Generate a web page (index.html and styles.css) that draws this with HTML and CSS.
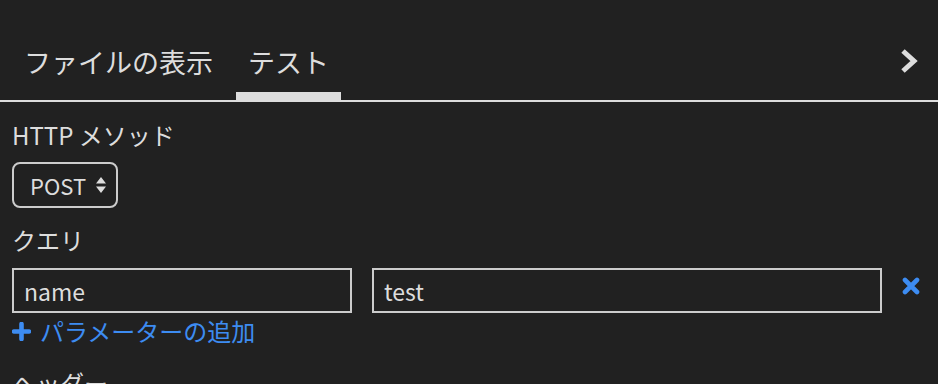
FILE: index.html
```html
<!DOCTYPE html>
<html lang="ja">
<head>
<meta charset="utf-8">
<link rel="stylesheet" href="styles.css">
</head>
<body>
<div class="tabbar">
  <div class="tabs">
    <div class="tab">ファイルの表示</div>
    <div class="tab active">テスト</div>
  </div>
  <svg class="chevron" width="18" height="26" viewBox="0 0 18 26"><path d="M3 3 L14 13 L3 23" fill="none" stroke="#dddddd" stroke-width="5" stroke-linejoin="miter"/></svg>
</div>
<div class="content">
  <div class="label">HTTP メソッド</div>
  <div class="select">
    <span class="select-text">POST</span>
    <svg class="updown" width="10" height="18" viewBox="0 0 10 18"><path d="M5 1 L10 7.5 L0 7.5 Z M5 17 L10 10.5 L0 10.5 Z" fill="#dddddd"/></svg>
  </div>
  <div class="label label-query">クエリ</div>
  <div class="param-row">
    <input class="field field-key" type="text" value="name">
    <input class="field field-value" type="text" value="test">
    <svg class="remove" width="18" height="18" viewBox="0 0 18 18"><path d="M3 3 L15 15 M15 3 L3 15" stroke="#3d8cf2" stroke-width="4.6" stroke-linecap="round"/></svg>
  </div>
  <div class="add-param">
    <svg class="plus" width="19" height="19" viewBox="0 0 19 19"><path d="M9.5 2 V17 M2 9.5 H17" stroke="#3d8cf2" stroke-width="4.6" stroke-linecap="round"/></svg>
    <span>パラメーターの追加</span>
  </div>
  <div class="label label-header">ヘッダー</div>
</div>
</body>
</html>
```
FILE: styles.css
```css
html, body {
  margin: 0;
  padding: 0;
  background: #212121;
  color: #dddddd;
  font-family: "Noto Sans CJK JP", "Noto Sans", sans-serif;
  overflow: hidden;
}
.tabbar {
  display: flex;
  align-items: flex-start;
  justify-content: space-between;
  border-bottom: 2px solid #dddddd;
  padding: 0 20px 0 12px;
}
.tabs {
  display: flex;
  gap: 11px;
}
.tab {
  font-size: 27px;
  line-height: 40px;
  padding: 42px 12px 10px;
  border-bottom: 8px solid transparent;
  white-space: nowrap;
}
.tab.active {
  border-bottom-color: #dddddd;
}
.chevron {
  margin-top: 48px;
}
.content {
  padding: 0 12px;
}
.label {
  font-size: 24px;
  line-height: 30px;
  margin-top: 18px;
}
.select {
  margin-top: 12px;
  width: 106px;
  height: 46px;
  box-sizing: border-box;
  border: 2px solid #cccccc;
  border-radius: 8px;
  display: flex;
  align-items: center;
  padding: 0 10px 0 16px;
  justify-content: space-between;
}
.select-text {
  font-size: 22px;
  line-height: 28px;
}
.label-query {
  margin-top: 17px;
}
.param-row {
  margin-top: 13px;
  display: flex;
  align-items: flex-start;
}
.field {
  height: 45px;
  box-sizing: border-box;
  border: 2px solid #cccccc;
  border-radius: 0;
  background: transparent;
  color: #dddddd;
  font-family: "Noto Sans CJK JP", "Noto Sans", sans-serif;
  font-size: 23px;
  padding: 0 10px;
  margin: 0;
  outline: none;
}
.field-key {
  width: 340px;
}
.field-value {
  width: 510px;
  margin-left: 20px;
}
.remove {
  margin-left: 20px;
  margin-top: 9px;
}
.add-param {
  margin-top: 3px;
  display: flex;
  align-items: center;
  gap: 9px;
  color: #3d8cf2;
  font-size: 24px;
  line-height: 30px;
}
.label-header {
  margin-top: 22px;
}
```
